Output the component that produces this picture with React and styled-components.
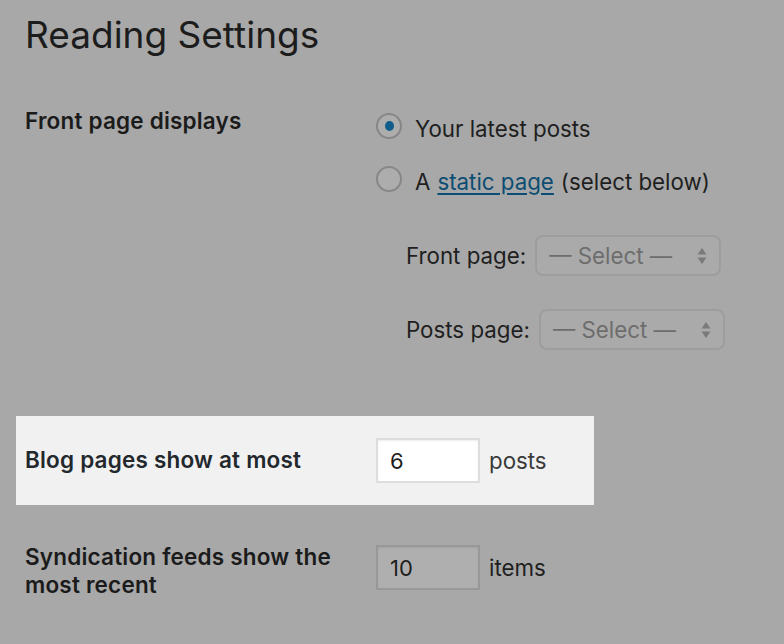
import React from "react";
import styled, { createGlobalStyle } from "styled-components";

const GlobalStyle = createGlobalStyle`
  html, body {
    margin: 0;
    padding: 0;
    background: #a8a8a8;
  }
  body {
    font-family: Inter, "Liberation Sans", Arial, sans-serif;
    color: #1e1e1e;
  }
`;

const Page = styled.div`
  width: 784px;
  height: 644px;
  overflow: hidden;
  padding-top: 15px;
  box-sizing: border-box;
`;

const Title = styled.h1`
  margin: 0 0 0 25px;
  font-size: 37px;
  line-height: 40px;
  font-weight: 400;
  color: #1c1c1c;
`;

const Table = styled.div`
  margin: 54px 0 0 16px;
  width: 578px;
`;

const Row = styled.div`
  display: grid;
  grid-template-columns: 351px max-content;
  padding: ${(p) => p.$pad || "0"} 9px;
  height: ${(p) => p.$height || "auto"};
  margin-top: ${(p) => p.$top || "0"};
  background: ${(p) => (p.$active ? "#f1f1f1" : "transparent")};
  box-sizing: border-box;
  white-space: nowrap;
`;

const Label = styled.div`
  font-size: 22.5px;
  letter-spacing: 0.2px;
  line-height: 28px;
  font-weight: 600;
  color: ${(p) => (p.$active ? "#23282d" : "#1b1b1b")};
  margin-top: ${(p) => p.$offset || "0"};
`;

const Field = styled.div`
  display: flex;
  flex-direction: column;
`;

const Option = styled.label`
  display: flex;
  align-items: center;
  height: 28px;
  margin-bottom: 25px;
  font-size: 22.3px;
  color: #1f1f1f;
`;

const Radio = styled.span`
  width: 26px;
  height: 26px;
  border-radius: 50%;
  border: 2px solid #878787;
  background: #adadad;
  box-sizing: border-box;
  margin: -4px 13px 0 0;
  display: flex;
  align-items: center;
  justify-content: center;
  &::after {
    content: "";
    display: ${(p) => (p.$checked ? "block" : "none")};
    width: 9px;
    height: 10px;
    border-radius: 50%;
    background: #0f5d8a;
  }
`;

const Link = styled.a`
  color: #0c4d73;
  text-decoration: underline;
  text-underline-offset: 3px;
  margin: 0 7px;
`;

const SubRow = styled.div`
  display: flex;
  align-items: center;
  margin: ${(p) => p.$margin || "0"};
  padding-left: 30px;
  font-size: 22.3px;
  color: #1f1f1f;
`;

const Select = styled.div`
  display: flex;
  align-items: center;
  justify-content: space-between;
  width: 186px;
  height: 41px;
  margin-left: 9px;
  padding: 0 12px 0 12px;
  box-sizing: border-box;
  border: 2px solid #9d9d9d;
  border-radius: 8px;
  background: #aaaaaa;
  color: #6d6d6d;
  font-size: 22.3px;
`;

const Arrows = styled.svg`
  width: 10px;
  height: 20px;
`;

const InputRow = styled.div`
  display: flex;
  align-items: center;
  font-size: 22.3px;
  color: ${(p) => (p.$active ? "#3a3a3a" : "#1f1f1f")};
`;

const NumberBox = styled.div`
  width: 104px;
  height: 45px;
  box-sizing: border-box;
  border: 2px solid ${(p) => (p.$active ? "#dddddd" : "#989898")};
  background: ${(p) => (p.$active ? "#ffffff" : "#afafaf")};
  box-shadow: inset 0 1px 2px rgba(0, 0, 0, 0.07);
  padding-left: 12px;
  display: flex;
  align-items: center;
  font-size: 22px;
  color: #1e1e1e;
  margin-right: 9px;
`;

function SelectBox() {
  return (
    <Select>
      <span>— Select —</span>
      <Arrows viewBox="0 0 10 20">
        <path d="M5 2 L9.5 8.5 H0.5 Z" fill="#7a7a7a" />
        <path d="M5 18 L9.5 11.5 H0.5 Z" fill="#7a7a7a" />
      </Arrows>
    </Select>
  );
}

export default function App() {
  return (
    <Page>
      <GlobalStyle />
      <Title>Reading Settings</Title>
      <Table>
        <Row>
          <Label $offset="-2px">Front page displays</Label>
          <Field>
            <Option style={{ marginTop: "5px" }}>
              <Radio $checked />
              Your latest posts
            </Option>
            <Option>
              <Radio />
              A<Link>static page</Link>(select below)
            </Option>
            <SubRow $margin="15px 0 0 0">
              Front page: <SelectBox />
            </SubRow>
            <SubRow $margin="33px 0 0 0">
              Posts page: <SelectBox />
            </SubRow>
          </Field>
        </Row>
        <Row $active $top="66px" $height="89px" $pad="19px">
          <Label $active $offset="11px">Blog pages show at most</Label>
          <InputRow $active>
            <NumberBox $active>6</NumberBox>
            posts
          </InputRow>
        </Row>
        <Row $pad="40px">
          <Label $offset="-2px">
            Syndication feeds show the
            <br />
            most recent
          </Label>
          <InputRow style={{ alignSelf: "start" }}>
            <NumberBox>10</NumberBox>
            items
          </InputRow>
        </Row>
      </Table>
    </Page>
  );
}
